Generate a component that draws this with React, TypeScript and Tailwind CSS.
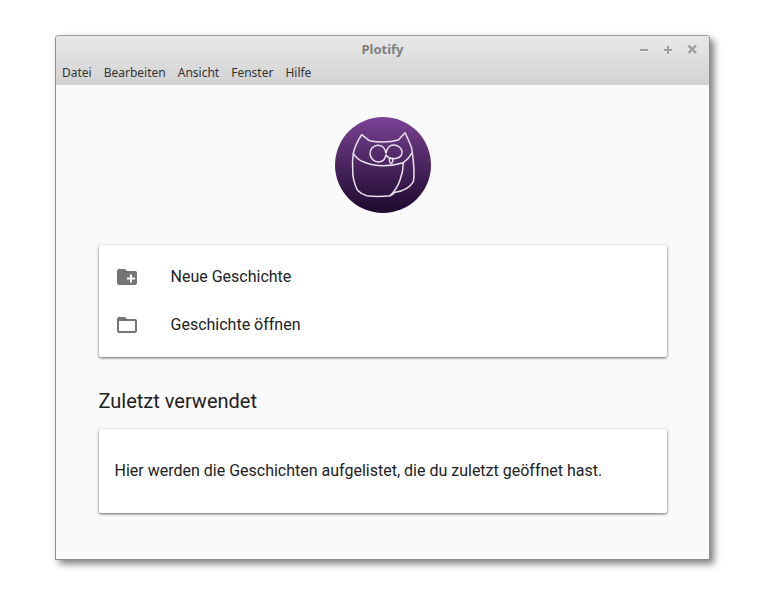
const menuItems = ['Datei', 'Bearbeiten', 'Ansicht', 'Fenster', 'Hilfe'];

function OwlLogo() {
  return (
    <div className="h-24 w-24 rounded-full bg-gradient-to-b from-[#7b4295] to-[#1f0a2e]">
      <svg viewBox="0 0 96 96" width="96" height="96" fill="none" stroke="#e9e2ed" strokeWidth="1.5" strokeLinecap="round" strokeLinejoin="round">
        <path d="M26.7 17.7 L34.3 23.7 C44 25.5 54 25.5 63.3 23 L70 15.7 C72.5 21 75 26 76.7 31.3 C78 40 79 48 79 56 C79 60 79 62 78.3 64.7 C76.5 68 74.5 70 71.7 71.3 C68 73.5 64 74.8 60 75.3 C58.5 77 57 78 55 78.7 C47 79.7 39 79.7 31.7 78.7 C27.5 77.5 24.5 75.5 22.3 73 C19 66 17.5 60 17.7 53 C17.3 47 17.5 41 18.3 36.3 C20 29 23 23 26.7 17.7 Z" />
        <path d="M18.3 36.3 C20.5 40 24 43 28.3 44.7 C34 47.3 41 48.7 48.3 48.7 C55.5 48.7 62.5 47.5 68.3 45.7 C71.5 43.5 74.5 40 76.7 36.3" />
        <path d="M68.3 45.7 C68.3 52 67 58 65 63 C63 69 59 75 55 78.7" />
        <path d="M51 36 C50 31 46.5 28 42.5 28.3 C38 28.7 35 32.5 35 36.5 C35 41 39 45 43.5 45 C47.5 45 50 42 51 38 C53 41 57 42 60.5 41.5 C65 41 67.5 38 67 34.5 C66.5 30.5 62.5 28 58.5 28 C54.5 28 52 31.5 51 36 Z" />
        <path d="M54.8 41 C54 43 54.5 46 56 46.3 C57.5 46 58 43.5 57.6 41.3" />
      </svg>
    </div>
  );
}

function FolderPlusIcon() {
  return (
    <svg viewBox="0 0 20 16" width="20" height="16">
      <path fill="#757575" fillRule="evenodd" d="M2 0h6l2 2h8a2 2 0 0 1 2 2v10a2 2 0 0 1-2 2H2a2 2 0 0 1-2-2V2a2 2 0 0 1 2-2Zm11 5.5V8.5h-3v2h3v3h2v-3h3v-2h-3v-3h-2Z" />
    </svg>
  );
}

function FolderOpenIcon() {
  return (
    <svg viewBox="0 0 20 16" width="20" height="16">
      <path fill="#757575" fillRule="evenodd" d="M2 0h6l2 2h8a2 2 0 0 1 2 2v10a2 2 0 0 1-2 2H2a2 2 0 0 1-2-2V2a2 2 0 0 1 2-2Zm0 4v10h16V4H2Z" />
    </svg>
  );
}

function WindowControls() {
  return (
    <svg width="58" height="11" viewBox="0 0 58 11" className="absolute right-[11px] top-[8px]" fill="none" strokeWidth="2">
      <g stroke="#f0f0f0" transform="translate(0 1)">
        <path d="M0 6h8" />
        <path d="M24 6h8M28 2v8" />
      </g>
      <g stroke="#9c9c9c">
        <path d="M0 6h8" />
        <path d="M24 6h8M28 2v8" />
        <path d="M48.5 1.5l7.5 7.5M56 1.5l-7.5 7.5" strokeWidth="2.4" />
      </g>
    </svg>
  );
}

export default function App() {
  return (
    <div className="h-[599px] w-[769px] overflow-hidden bg-white pl-[55px] pt-[35px]">
      <div className="flex h-[525px] w-[655px] flex-col overflow-hidden rounded-t-[4px] border border-t-[#9a9a9a] border-x-[#8f8f8f] border-b-[#8f8f8f] bg-[#fafafa] shadow-[4px_4px_7px_rgba(0,0,0,0.5)]">
        <div className="h-[49px] bg-gradient-to-b from-[#e8e8e8] to-[#d2d2d2]">
          <div className="relative h-[27px] pt-[4px] text-center font-['Noto_Sans',sans-serif] text-[13px] font-bold leading-[18px] text-[#808080]">
            Plotify
            <WindowControls />
          </div>
          <div className="flex gap-[12px] pl-[6px] font-['Noto_Sans',sans-serif] text-[12px] leading-[20px] text-[#333333]">
            {menuItems.map((item) => (
              <span key={item}>{item}</span>
            ))}
          </div>
        </div>

        <div className="flex flex-1 flex-col px-[42.5px] pt-[32px] font-['Roboto',sans-serif] text-[#212121]">
          <div className="flex justify-center">
            <OwlLogo />
          </div>

          <div className="mt-[32px] rounded-[2px] bg-white py-[8px] shadow-[0_1px_3px_rgba(0,0,0,0.6)]">
            <div className="flex h-[48px] items-center pl-[18px] text-[16px]">
              <FolderPlusIcon />
              <span className="ml-[34px]">Neue Geschichte</span>
            </div>
            <div className="flex h-[48px] items-center pl-[18px] text-[16px]">
              <FolderOpenIcon />
              <span className="ml-[34px]">Geschichte öffnen</span>
            </div>
          </div>

          <h2 className="mt-[31px] text-[20px] leading-[26px]">Zuletzt verwendet</h2>

          <div className="mt-[15px] flex h-[84px] items-center rounded-[2px] bg-white px-[16px] text-[16px] shadow-[0_1px_3px_rgba(0,0,0,0.6)]">
            Hier werden die Geschichten aufgelistet, die du zuletzt geöffnet hast.
          </div>
        </div>
      </div>
    </div>
  );
}
